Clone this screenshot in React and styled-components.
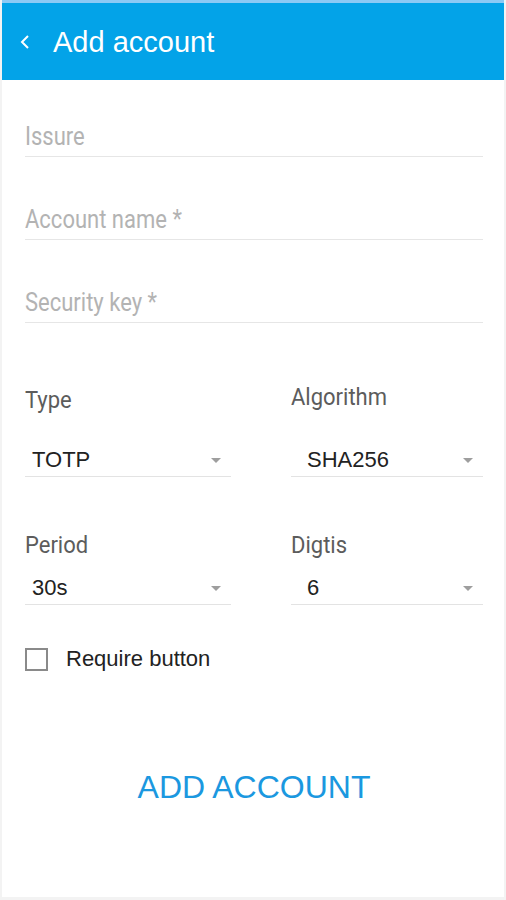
import React from "react";
import styled, { createGlobalStyle } from "styled-components";

const GlobalStyle = createGlobalStyle`
  html, body {
    margin: 0;
    padding: 0;
    background: #ffffff;
  }
  * {
    box-sizing: border-box;
  }
`;

export default function App() {
  const [requireButton, setRequireButton] = React.useState(false);

  return (
    <Screen>
      <GlobalStyle />
      <Header>
        <BackButton aria-label="back">
          <svg width="12" height="16" viewBox="0 0 12 16">
            <polyline
              points="9,2 3,8 9,14"
              fill="none"
              stroke="#ffffff"
              strokeWidth="2"
            />
          </svg>
        </BackButton>
        <Title>Add account</Title>
      </Header>

      <Form>
        <TextFields>
          <TextField>
            <Placeholder>Issure</Placeholder>
          </TextField>
          <TextField>
            <Placeholder>Account name *</Placeholder>
          </TextField>
          <TextField>
            <Placeholder>Security key *</Placeholder>
          </TextField>
        </TextFields>

        <SelectRow top={63}>
          <SelectColumn spacing={29}>
            <Label>Type</Label>
            <Select inset={7}>
              <Value>TOTP</Value>
              <Caret />
            </Select>
          </SelectColumn>
          <SelectColumn spacing={32}>
            <Label lift={3}>Algorithm</Label>
            <Select inset={16}>
              <Value>SHA256</Value>
              <Caret />
            </Select>
          </SelectColumn>
        </SelectRow>

        <SelectRow top={54}>
          <SelectColumn spacing={12}>
            <Label>Period</Label>
            <Select inset={7}>
              <Value>30s</Value>
              <Caret />
            </Select>
          </SelectColumn>
          <SelectColumn spacing={12}>
            <Label>Digtis</Label>
            <Select inset={16}>
              <Value>6</Value>
              <Caret />
            </Select>
          </SelectColumn>
        </SelectRow>

        <CheckRow onClick={() => setRequireButton(!requireButton)}>
          <CheckBox checked={requireButton} />
          <CheckLabel>Require button</CheckLabel>
        </CheckRow>

        <AddButton>ADD ACCOUNT</AddButton>
      </Form>
    </Screen>
  );
}

const Screen = styled.div`
  width: 506px;
  height: 900px;
  background: #ffffff;
  border-left: 2px solid #f3f3f3;
  border-right: 2px solid #f3f3f3;
  border-bottom: 3px solid #f3f3f3;
  display: flex;
  flex-direction: column;
  font-family: "Liberation Sans", Arial, sans-serif;
  overflow: hidden;
`;

// Top bar
const Header = styled.div`
  height: 80px;
  margin: 0 -2px;
  background: #03a3e8;
  border-top: 3px solid #8ccaf5;
  display: flex;
  align-items: center;
  padding-left: 19px;
  gap: 20px;
`;

const BackButton = styled.div`
  display: flex;
  align-items: center;
  width: 14px;
  height: 16px;
  margin-top: 1px;
`;

const Title = styled.div`
  color: #ffffff;
  font-size: 29px;
  line-height: 34px;
  margin-top: 1px;
`;

// Form
const Form = styled.div`
  display: flex;
  flex-direction: column;
  padding: 43px 21px 0 23px;
`;

const TextFields = styled.div`
  display: flex;
  flex-direction: column;
  gap: 49px;
`;

const TextField = styled.div`
  height: 34px;
  display: flex;
  align-items: flex-end;
  padding-bottom: 5px;
  border-bottom: 1px solid #e6e6e6;
`;

const Placeholder = styled.span`
  font-family: Roboto, "Liberation Sans", sans-serif;
  font-size: 22px;
  line-height: 28px;
  color: #b3b3b3;
  display: inline-block;
  transform: scaleY(1.18);
`;

const SelectRow = styled.div`
  display: grid;
  grid-template-columns: 206px 192px;
  column-gap: 60px;
  margin-top: ${(props) => props.top}px;
`;

const SelectColumn = styled.div`
  display: flex;
  flex-direction: column;
  gap: ${(props) => props.spacing}px;
`;

const Label = styled.div`
  font-family: Roboto, "Liberation Sans", sans-serif;
  font-size: 22px;
  line-height: 28px;
  color: #5c5c5c;
  margin-top: ${(props) => -(props.lift || 0)}px;
  transform: scaleY(1.12);
`;

const Select = styled.div`
  height: 34px;
  display: flex;
  align-items: flex-end;
  justify-content: space-between;
  padding: 0 10px 2px ${(props) => props.inset}px;
  border-bottom: 1px solid #e3e3e3;
`;

const Value = styled.span`
  font-size: 22px;
  line-height: 28px;
  color: #222222;
`;

const Caret = styled.span`
  width: 0;
  height: 0;
  border-left: 5px solid transparent;
  border-right: 5px solid transparent;
  border-top: 5px solid #9e9e9e;
  align-self: center;
  margin-top: 4px;
`;

const CheckRow = styled.div`
  display: flex;
  align-items: center;
  gap: 18px;
  margin-top: 40px;
  height: 28px;
  cursor: pointer;
`;

const CheckBox = styled.span`
  width: 23px;
  height: 23px;
  border: 2px solid #8a8a8a;
  background: ${(props) => (props.checked ? "#03a3e8" : "#ffffff")};
`;

const CheckLabel = styled.span`
  font-size: 22px;
  line-height: 28px;
  color: #222222;
`;

const AddButton = styled.div`
  margin-top: 90px;
  height: 48px;
  display: flex;
  align-items: center;
  justify-content: center;
  font-size: 32px;
  color: #1b98e0;
  cursor: pointer;
`;
